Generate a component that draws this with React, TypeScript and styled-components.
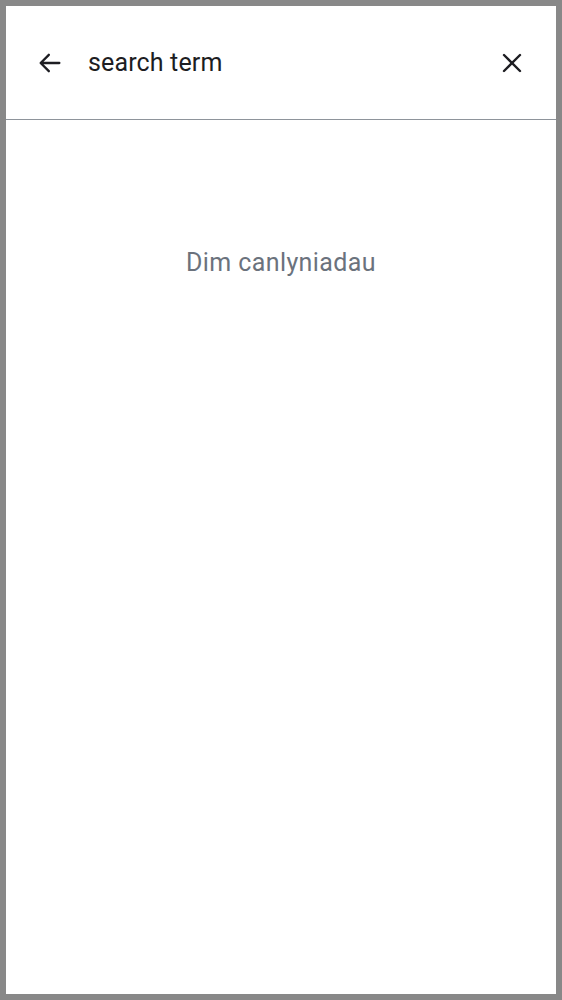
import React from "react";
import styled, { createGlobalStyle } from "styled-components";

const GlobalStyle = createGlobalStyle`
  html, body {
    margin: 0;
    padding: 0;
    background: #888888;
  }
  body {
    font-family: Roboto, "Noto Sans", sans-serif;
  }
`;

const Frame = styled.div`
  box-sizing: border-box;
  width: 562px;
  height: 1000px;
  padding: 6px;
  background: #888888;
`;

const Screen = styled.div`
  display: flex;
  flex-direction: column;
  height: 100%;
  background: #ffffff;
`;

const Header = styled.div`
  display: flex;
  align-items: center;
  height: 113px;
  padding: 0 20px 0 20px;
  border-bottom: 1px solid #8e949b;
`;

const IconButton = styled.button`
  display: flex;
  align-items: center;
  justify-content: center;
  width: 48px;
  height: 48px;
  padding: 0;
  border: none;
  background: transparent;
  color: #1d1d22;
  cursor: pointer;
`;

const SearchInput = styled.input`
  flex: 1;
  margin-left: 14px;
  border: none;
  outline: none;
  background: transparent;
  font-family: Roboto, "Noto Sans", sans-serif;
  font-size: 25px;
  letter-spacing: 0.15px;
  color: #1d1d22;
  padding: 0;
`;

const Body = styled.div`
  flex: 1;
  display: flex;
  justify-content: center;
  padding-top: 127px;
`;

const Empty = styled.p`
  margin: 0;
  font-size: 25px;
  letter-spacing: 0.4px;
  line-height: 32px;
  color: #6b727d;
`;

const App: React.FC = () => {
  return (
    <Frame>
      <GlobalStyle />
      <Screen>
        <Header>
          <IconButton aria-label="Back">
            <svg width="28" height="28" viewBox="0 0 24 24" fill="none">
              <path
                d="M20 12H4.5M11 5l-7 7 7 7"
                stroke="currentColor"
                strokeWidth="2"
                strokeLinecap="round"
                strokeLinejoin="round"
              />
            </svg>
          </IconButton>
          <SearchInput defaultValue="search term" />
          <IconButton aria-label="Clear">
            <svg width="24" height="24" viewBox="0 0 24 24" fill="none">
              <path
                d="M4 4l16 16M20 4L4 20"
                stroke="currentColor"
                strokeWidth="2.4"
                strokeLinecap="round"
              />
            </svg>
          </IconButton>
        </Header>
        <Body>
          <Empty>Dim canlyniadau</Empty>
        </Body>
      </Screen>
    </Frame>
  );
};

export default App;
